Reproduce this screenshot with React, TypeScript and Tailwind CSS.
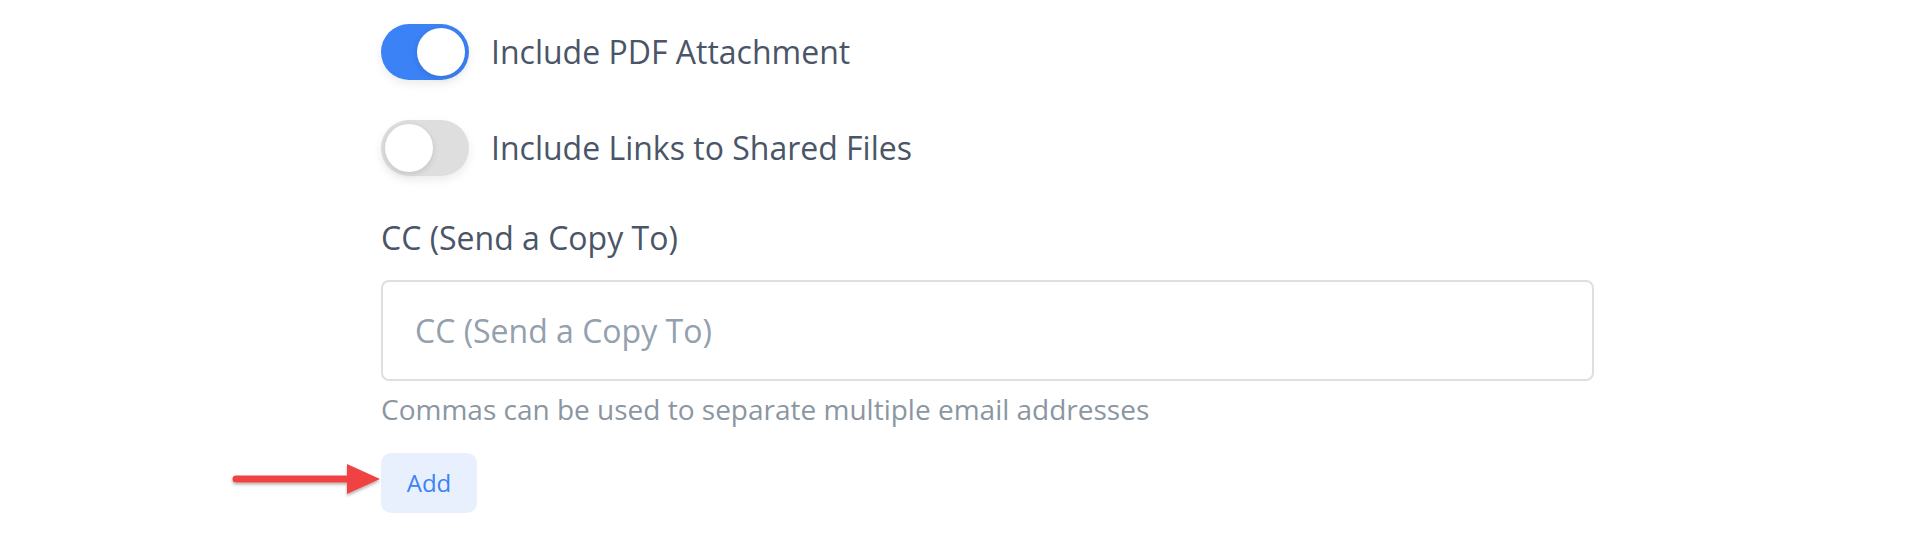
import React, { useState } from "react"

const Toggle = ({ on, onClick }: { on: boolean; onClick: () => void }) => (
  <button
    type="button"
    onClick={onClick}
    className={`relative flex h-[56px] w-[88px] shrink-0 items-center rounded-full px-[4px] shadow-[0_4px_10px_rgba(0,0,0,0.08)] ${
      on ? "justify-end bg-[#3b82f6]" : "justify-start bg-[#dedede]"
    }`}
  >
    <span className="block h-[48px] w-[48px] rounded-full bg-white shadow-[0_2px_6px_rgba(0,0,0,0.12)]" />
  </button>
)

const Arrow = () => (
  <svg width="152" height="40" viewBox="0 0 152 40" className="absolute left-[-150px] top-[10px]">
    <defs>
      <filter id="sh" x="-10%" y="-50%" width="120%" height="200%">
        <feDropShadow dx="0" dy="2" stdDeviation="1.5" floodColor="#000" floodOpacity="0.3" />
      </filter>
    </defs>
    <g filter="url(#sh)">
      <line x1="5" y1="16" x2="122" y2="16" stroke="#f04242" strokeWidth="7" strokeLinecap="round" />
      <polygon points="116,1 149,16 116,31" fill="#f04242" />
    </g>
  </svg>
)

export default function App() {
  const [pdf, setPdf] = useState(true)
  const [links, setLinks] = useState(false)

  return (
    <div className="min-h-[537px] w-full bg-white font-['Open_Sans',sans-serif]">
      <div className="flex flex-col pl-[381px] pt-[24px]">
        <div className="flex items-center gap-[22px]">
          <Toggle on={pdf} onClick={() => setPdf(!pdf)} />
          <span className="text-[32px] leading-[44px] text-[#4a5568]">Include PDF Attachment</span>
        </div>
        <div className="mt-[40px] flex items-center gap-[22px]">
          <Toggle on={links} onClick={() => setLinks(!links)} />
          <span className="text-[32px] leading-[44px] text-[#4a5568]">Include Links to Shared Files</span>
        </div>

        <label className="mt-[40px] text-[32px] leading-[44px] text-[#4a5568]">CC (Send a Copy To)</label>
        <input
          type="text"
          placeholder="CC (Send a Copy To)"
          className="mt-[20px] h-[101px] w-[1213px] rounded-[8px] border-2 border-[#dfdfdf] px-[32px] text-[32px] text-[#4a5568] outline-none placeholder:text-[#93a0ae]"
        />
        <p className="mt-[10px] text-[28px] leading-[36px] text-[#8b96a2]">
          Commas can be used to separate multiple email addresses
        </p>

        <div className="relative mt-[26px] self-start">
          <Arrow />
          <button
            type="button"
            className="h-[60px] w-[96px] rounded-[10px] bg-[#e8f0fe] text-[24px] text-[#3b82f6]"
          >
            Add
          </button>
        </div>
      </div>
    </div>
  )
}
